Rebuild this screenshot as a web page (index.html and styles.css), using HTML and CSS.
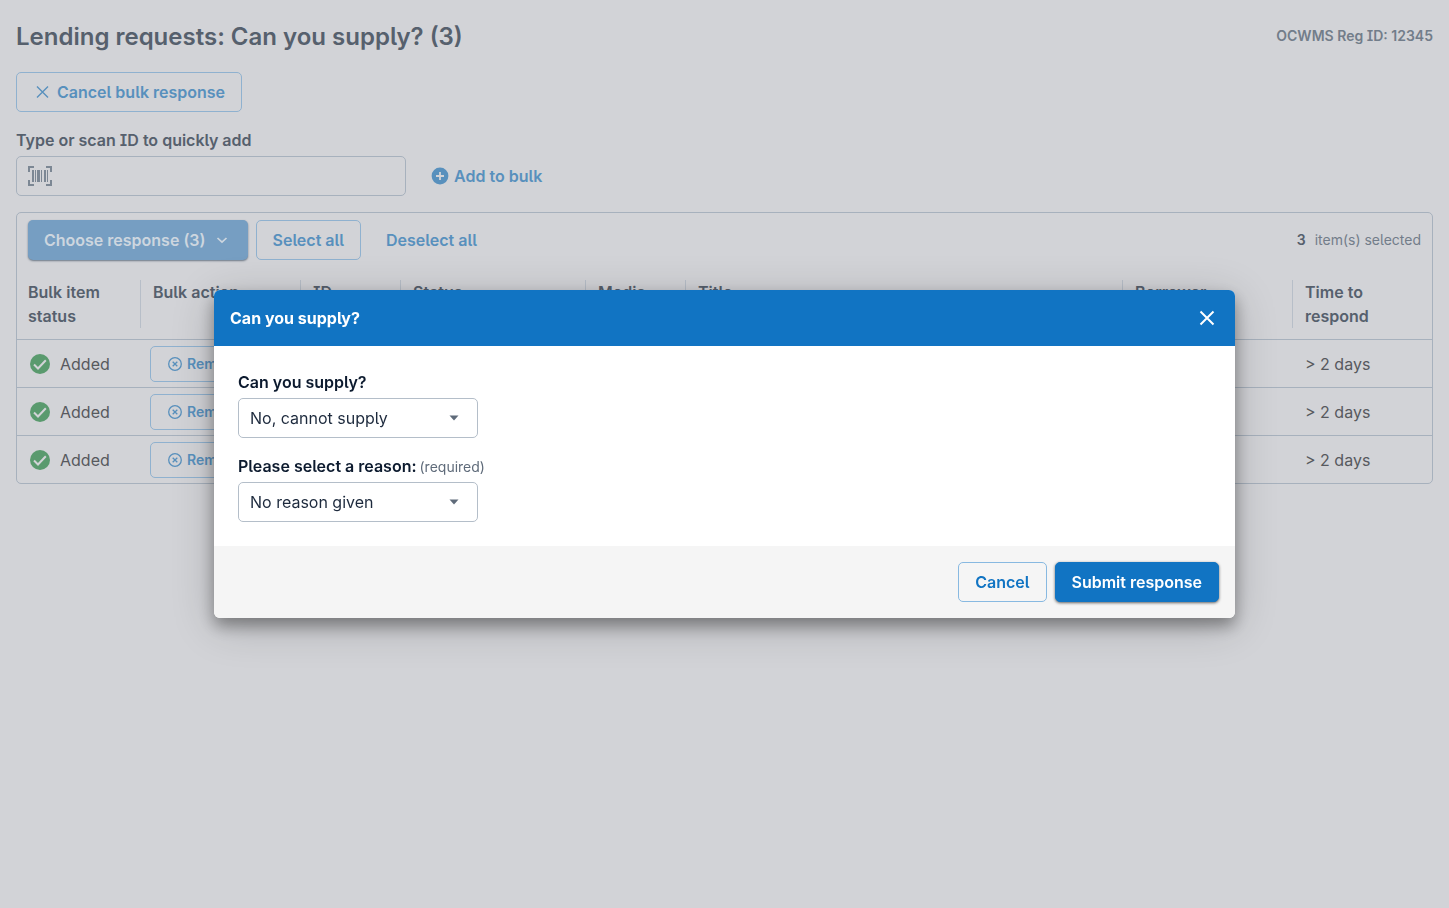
FILE: index.html
```html
<!DOCTYPE html>
<html lang="en">
<head>
<meta charset="utf-8">
<meta name="viewport" content="width=device-width, initial-scale=1">
<title>Lending requests</title>
<link rel="stylesheet" href="styles.css">
</head>
<body>
<main class="page">
  <header class="page-header">
    <h1 class="page-title">Lending requests: Can you supply? (3)</h1>
    <span class="reg-id">OCWMS Reg ID: 12345</span>
  </header>
  <div class="actions">
    <button class="btn btn-outline btn-with-icon" type="button">
      <svg class="icon" width="20" height="20" viewBox="0 0 20 20" aria-hidden="true"><path d="M4 4.500l11 11M15 4.500l-11 11" fill="none" stroke="currentColor" stroke-width="1.400"/></svg>
      Cancel bulk response
    </button>
  </div>
  <label class="scan-label" for="scan">Type or scan ID to quickly add</label>
  <div class="scan-row">
    <div class="scan-field">
      <svg class="barcode" width="24" height="20" viewBox="0 0 24 20" aria-hidden="true"><path d="M1 6V1h5M18 1h5v5M1 14v5h5M18 19h5v-5" fill="none" stroke="currentColor" stroke-width="2"/><path d="M4 4h2v12H4zM7 4h1v12H7zM9 4h3v12H9zM13 4h1v12h-1zM16 4h2v12h-2zM19 4h1v12h-1z" fill="currentColor"/></svg>
      <input class="scan-input" id="scan" type="text">
    </div>
    <button class="btn btn-text add-btn" type="button">
      <svg class="icon" width="20" height="20" viewBox="0 0 20 20" aria-hidden="true"><circle cx="10" cy="10" r="8.400" fill="currentColor"/><path d="M10 6v8M6 10h8" stroke="#d2d3d7" stroke-width="1.800"/></svg>
      Add to bulk
    </button>
  </div>
  <section class="panel">
    <div class="toolbar">
      <button class="btn btn-filled-dim" type="button">Choose response (3)
        <svg width="12" height="12" viewBox="0 0 12 12" aria-hidden="true"><path d="M1.500 4l4.500 4.200L10.500 4" fill="none" stroke="currentColor" stroke-width="1.700"/></svg>
      </button>
      <button class="btn btn-outline" type="button">Select all</button>
      <button class="btn btn-text" type="button">Deselect all</button>
      <span class="selected"><b>3</b> item(s) selected</span>
    </div>
    <table class="requests">
      <colgroup><col class="c-status"><col class="c-action"><col class="c-id"><col class="c-state"><col class="c-media"><col><col class="c-borrower"><col class="c-time"></colgroup>
      <thead>
        <tr>
          <th><div class="head">Bulk item status</div></th><th><div class="head">Bulk action</div></th><th><div class="head">ID</div></th><th><div class="head">Status</div></th><th><div class="head">Media</div></th><th><div class="head">Title</div></th><th><div class="head">Borrower</div></th><th><div class="head">Time to respond</div></th>
        </tr>
      </thead>
      <tbody>
        <tr>
          <td><div class="added"><svg width="24" height="24" viewBox="0 0 24 24" aria-hidden="true"><circle cx="12" cy="12" r="10" fill="#5a9a6e"/><path d="M6 12.500l4 4 7.800-8.300" fill="none" stroke="#d2d3d7" stroke-width="2"/></svg>Added</div></td>
          <td><button class="btn btn-outline btn-small" type="button"><svg width="16" height="16" viewBox="0 0 16 16" aria-hidden="true"><g fill="none" stroke="currentColor" stroke-width="1.300"><circle cx="8" cy="8" r="6.300"/><path d="M5.700 5.700l4.600 4.600M10.300 5.700l-4.600 4.600"/></g></svg>Remove</button></td>
          <td></td><td></td><td></td><td></td><td></td><td>&gt; 2 days</td>
        </tr>
        <tr>
          <td><div class="added"><svg width="24" height="24" viewBox="0 0 24 24" aria-hidden="true"><circle cx="12" cy="12" r="10" fill="#5a9a6e"/><path d="M6 12.500l4 4 7.800-8.300" fill="none" stroke="#d2d3d7" stroke-width="2"/></svg>Added</div></td>
          <td><button class="btn btn-outline btn-small" type="button"><svg width="16" height="16" viewBox="0 0 16 16" aria-hidden="true"><g fill="none" stroke="currentColor" stroke-width="1.300"><circle cx="8" cy="8" r="6.300"/><path d="M5.700 5.700l4.600 4.600M10.300 5.700l-4.600 4.600"/></g></svg>Remove</button></td>
          <td></td><td></td><td></td><td></td><td></td><td>&gt; 2 days</td>
        </tr>
        <tr>
          <td><div class="added"><svg width="24" height="24" viewBox="0 0 24 24" aria-hidden="true"><circle cx="12" cy="12" r="10" fill="#5a9a6e"/><path d="M6 12.500l4 4 7.800-8.300" fill="none" stroke="#d2d3d7" stroke-width="2"/></svg>Added</div></td>
          <td><button class="btn btn-outline btn-small" type="button"><svg width="16" height="16" viewBox="0 0 16 16" aria-hidden="true"><g fill="none" stroke="currentColor" stroke-width="1.300"><circle cx="8" cy="8" r="6.300"/><path d="M5.700 5.700l4.600 4.600M10.300 5.700l-4.600 4.600"/></g></svg>Remove</button></td>
          <td></td><td></td><td></td><td></td><td></td><td>&gt; 2 days</td>
        </tr>
      </tbody>
    </table>
  </section>
</main>
<div class="backdrop">
  <div class="dialog" role="dialog" aria-modal="true" aria-labelledby="dialog-title">
    <header class="dialog-header">
      <h2 class="dialog-title" id="dialog-title">Can you supply?</h2>
      <button class="close" type="button" aria-label="Close"><svg width="24" height="24" viewBox="0 0 24 24" aria-hidden="true"><path d="M5.500 5.500l13 13M18.500 5.500l-13 13" fill="none" stroke="currentColor" stroke-width="2"/></svg></button>
    </header>
    <div class="dialog-body">
      <div class="field">
        <label class="field-label" for="supply">Can you supply?</label>
        <div class="select-wrap">
          <select class="select" id="supply"><option>No, cannot supply</option></select>
          <svg class="arrow" width="10" height="6" viewBox="0 0 10 6" aria-hidden="true"><path d="M.5.500h9L5 5.500z" fill="#5f6b7a"/></svg>
        </div>
      </div>
      <div class="field">
        <label class="field-label" for="reason">Please select a reason:<span class="required">(required)</span></label>
        <div class="select-wrap">
          <select class="select" id="reason"><option>No reason given</option></select>
          <svg class="arrow" width="10" height="6" viewBox="0 0 10 6" aria-hidden="true"><path d="M.5.500h9L5 5.500z" fill="#5f6b7a"/></svg>
        </div>
      </div>
    </div>
    <footer class="dialog-footer">
      <button class="btn btn-cancel" type="button">Cancel</button>
      <button class="btn btn-submit" type="button">Submit response</button>
    </footer>
  </div>
</div>
</body>
</html>
```
FILE: styles.css
```css
* { box-sizing: border-box; }
body {
  margin: 0;
  min-height: 100vh;
  background: #d2d3d7;
  color: #56606d;
  font: 16px/24px Inter, "Liberation Sans", sans-serif;
  font-feature-settings: "cv05", "cv08";
}
button, input, select { font: inherit; font-feature-settings: inherit; }
.page { padding: 16px; }
.page-header { display: flex; align-items: center; justify-content: space-between; height: 40px; }
.page-title { margin: 0; padding-top: 2px; font-size: 24px; line-height: 32px; font-weight: 600; }
.reg-id { color: #727d8a; font-size: 14px; font-weight: 600; }
.btn {
  display: inline-flex; align-items: center; justify-content: center;
  height: 40px; padding: 0 16px;
  border: 1px solid transparent; border-radius: 5px;
  background: none; color: #5890bd;
  font-weight: 600; line-height: 24px; white-space: nowrap; cursor: pointer;
}
.btn-outline { border-color: #8fb1cf; }
.btn-with-icon { gap: 4px; }
.actions { padding-top: 16px; }
.scan-label { display: block; margin-top: 16px; padding-bottom: 4px; font-weight: 600; }
.scan-row { display: flex; align-items: center; gap: 8px; }
.scan-field { display: flex; align-items: center; width: 390px; height: 40px; padding: 0 11px; border: 1px solid #a7b1bd; border-radius: 5px; color: #7c8794; }
.scan-input { flex: 1; min-width: 0; padding: 0 8px; border: 0; outline: 0; background: none; }
.add-btn { gap: 4px; padding: 0 15px; }
.panel { margin-top: 16px; border: 1px solid #a7b1bd; border-radius: 5px; }
.toolbar { display: flex; align-items: center; gap: 8px; padding: 7px 11px 8px; }
.btn-filled-dim { gap: 10px; padding-right: 20px; border: 0; background: #769ec2; color: #cdd6df; box-shadow: 0 1px 2px #6b7785; }
.selected { margin-left: auto; color: #727d8a; font-size: 14px; }
.selected b { margin-right: 5px; color: #56606d; font-weight: 600; }
.requests { width: 100%; table-layout: fixed; border-collapse: collapse; }
.c-status { width: 123px; }
.c-action { width: 160px; }
.c-id { width: 100px; }
.c-state { width: 185px; }
.c-media { width: 100px; }
.c-borrower { width: 170px; }
.c-time { width: 140px; }
.requests th { padding: 12px 0 11px; text-align: left; vertical-align: top; font-weight: 600; }
.head { height: 48px; padding: 0 12px; border-left: 1px solid #b7bec8; }
.requests th:first-child .head { padding-left: 11px; border-left: 0; }
.requests td { height: 48px; padding: 0 13px; border-top: 1px solid #a7b1bd; color: #57595e; }
.requests tr:last-child td { height: 47px; padding-top: 1px; }
.requests td:first-child { padding-left: 11px; }
.requests td:nth-child(2) { padding-left: 10px; }
.added { display: flex; align-items: center; gap: 8px; }
.btn-small { display: flex; gap: 4px; height: 36px; font-size: 14px; }
.backdrop { position: fixed; inset: 0; display: grid; place-items: center; padding: 16px 214px; }
.dialog {
  width: 100%; overflow: hidden; border-radius: 6px; background: #fff; color: #0c1a2e;
  box-shadow: 0 8px 16px rgba(0,0,0,.35), 0 8px 44px rgba(0,0,0,.2);
}
.dialog-header { display: flex; align-items: center; justify-content: space-between; height: 56px; padding: 0 16px; background: #1174c3; color: #fff; }
.dialog-title { margin: 0; font-size: 16px; font-weight: 700; }
.close { display: flex; padding: 0; border: 0; background: none; color: inherit; cursor: pointer; }
.dialog-body { display: grid; gap: 16px; padding: 24px; }
.field { display: grid; gap: 4px; justify-items: start; }
.field-label { font-weight: 600; }
.required { margin-left: 3px; color: #5f6b7a; font-size: 14px; line-height: 16px; font-weight: 400; }
.select-wrap { position: relative; width: 240px; }
.select { display: block; appearance: none; width: 100%; height: 40px; padding: 0 32px 0 11px; border: 1px solid #b4bec9; border-radius: 5px; background: #fff; color: #1d2a3d; }
.arrow { position: absolute; top: 17px; right: 19px; pointer-events: none; }
.dialog-footer { display: flex; justify-content: flex-end; gap: 8px; padding: 16px; background: #f5f5f5; }
.btn-cancel { border-color: #88b9e1; color: #1174c3; }
.btn-submit { border-color: #1174c3; background: #1174c3; color: #fff; box-shadow: 0 1px 3px rgba(0,0,0,.6); }
```
